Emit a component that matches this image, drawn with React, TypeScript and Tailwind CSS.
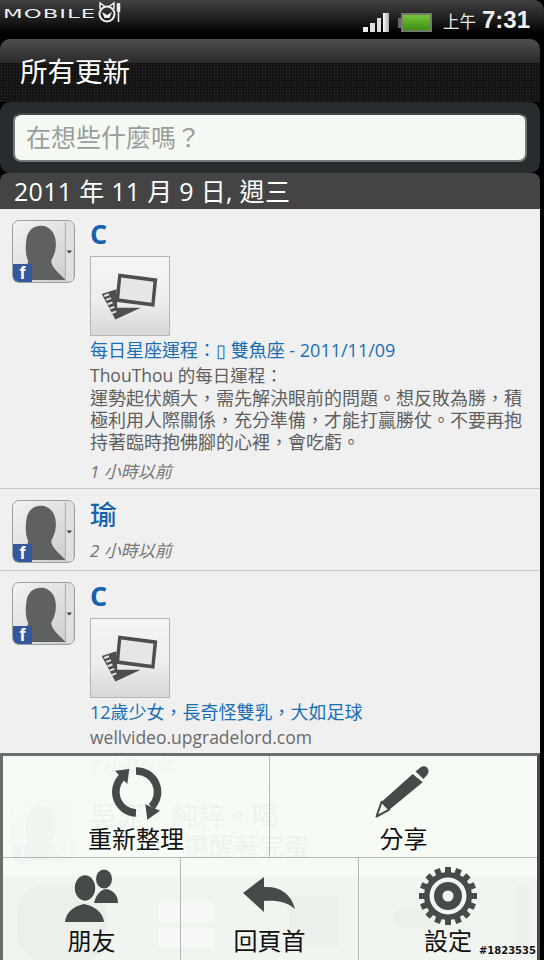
const FONT = "font-['Open_Sans','Noto_Sans_CJK_TC',sans-serif]";

function Avatar() {
  return (
    <div className="relative h-[63px] w-[63px] shrink-0 overflow-hidden rounded-[7px] border border-[#9aa0a0] bg-[linear-gradient(135deg,#f4f4f4,#c9cbc9)]">
      <svg viewBox="0 0 64 64" className="absolute inset-0 h-full w-full">
        <path d="M13 62V54C14 47 15 46 16 42C13 36 13 28 14 20C15 9 23 4 31 5C39 6 45 13 45 24C45 33 42 38 40 42C41 50 48 54 55 62Z" fill="#5f6160" />
        <rect x="55" y="1" width="8" height="62" fill="#dfe1df" />
        <path d="M55 1V63" stroke="#a9abaa" strokeWidth="1" />
        <path d="M56 31h6l-3 3z" fill="#444" />
      </svg>
      <div className="absolute bottom-0 left-0 flex h-[18px] w-[19px] items-end justify-center bg-[#33589b] text-[18px] leading-[18px] font-bold text-white font-['Liberation_Sans',sans-serif]">f</div>
    </div>
  );
}

function Thumb() {
  return (
    <div className="h-[80px] w-[80px] border border-[#b5b7b5] bg-[linear-gradient(180deg,#f5f5f5_0%,#eeeeee_55%,#d6d9d5_100%)]">
      <svg viewBox="0 0 80 80" className="h-full w-full">
        <path d="M11 38L26 33L27 52L51 52L25 64Z" fill="#4d4f4e" />
        <path d="M13.5 40l5-1.8M15.5 44l5-1.8M17 48.500l5-1.800M19 53l5-1.800M21 57.500l5-1.800" stroke="#e4e4e4" strokeWidth="2" />
        <path d="M28 17L68 22L65 51L25 46Z" fill="#4d4f4e" />
        <path d="M31 21L64 25.500L62 47L29 42.500Z" fill="#e6e7e5" />
      </svg>
    </div>
  );
}

function Name({ children }: { children: React.ReactNode }) {
  return <div className="h-[36px] text-[27px] leading-[28px] font-bold text-[#1562ac]">{children}</div>;
}

function Ago({ children }: { children: React.ReactNode }) {
  return <div className="text-[17px] leading-[24px] text-[#767676] italic">{children}</div>;
}

function Logo() {
  return (
    <div className="flex items-center">
      <span className="w-[95px] font-['DejaVu_Sans',sans-serif] text-[13px] leading-[14px] tracking-[0.6px] text-[#eeeeee] [transform-origin:left] [transform:scaleX(1.75)]">MOBILE</span>
      <svg viewBox="0 0 26 26" className="h-[26px] w-[26px]">
        <circle cx="9" cy="13" r="7.500" fill="none" stroke="#eee" strokeWidth="2" />
        <path d="M2 8L2 2L7 5.500M16 8L16 2L11 5.500" fill="none" stroke="#eee" strokeWidth="1.500" />
        <path d="M4 11L9 14L14 11L11.500 17H6.500Z" fill="#eee" />
        <path d="M20.500 2V21M19.500 3H21.500V10H19.500Z" stroke="#eee" strokeWidth="1.500" fill="none" />
      </svg>
    </div>
  );
}

function StatusBar() {
  return (
    <div className="flex h-[39px] shrink-0 items-start justify-between rounded-tr-[10px] bg-[linear-gradient(180deg,#424242_0%,#242424_40%,#000000_85%)] pr-[14px] pl-[3px]">
      <div className="pt-[1px]"><Logo /></div>
      <div className="flex h-[34px] items-end">
        <div className="flex h-[21px] items-end gap-[2px] pb-[2px]">
          <span className="h-[5px] w-[5px] bg-[#eeeeee]" />
          <span className="h-[9px] w-[5px] bg-[#dddddd]" />
          <span className="h-[14px] w-[4px] bg-[#dddddd]" />
          <span className="h-[19px] w-[6px] bg-[linear-gradient(90deg,#fff,#aaa)]" />
        </div>
        <div className="mb-[2px] ml-[9px] flex items-center">
          <span className="h-[10px] w-[3px] bg-[#666b62]" />
          <span className="h-[19px] w-[31px] border-2 border-[#727a6a] bg-[linear-gradient(180deg,#75c53a,#3f8f14)]" />
        </div>
        <span className="ml-[11px] text-[16.500px] leading-[24px] text-[#e8e8e8]">上午</span>
        <span className="ml-[6px] font-['Liberation_Sans',sans-serif] text-[24px] leading-[28px] font-bold text-[#eeeeee]">7:31</span>
      </div>
    </div>
  );
}

function TitleBar() {
  return (
    <div className="relative h-[63px] shrink-0 overflow-hidden rounded-t-[10px] bg-[#141414] bg-[radial-gradient(#2b2b2b_1px,transparent_1px)] bg-[length:3px_3px] pl-[20px]">
      <div className="absolute inset-x-0 top-0 h-[24px] bg-[linear-gradient(180deg,#555555,#2c2c2c)] opacity-90" />
      <div className="relative pt-[14px] text-[27.500px] leading-[38px] text-white">所有更新</div>
    </div>
  );
}

function Composer() {
  return (
    <div className="h-[71px] shrink-0 rounded-[10px] bg-[#272c2e] px-[13px] pt-[11px]">
      <div className="flex h-[49px] items-center rounded-[8px] border-2 border-[#747b75] border-t-[#454a4a] bg-[#f5f9f4] pl-[11px] text-[25px] text-[#9a9d9a]">在想些什麼嗎？</div>
    </div>
  );
}

function DateBar() {
  return (
    <div className="h-[36px] shrink-0 rounded-t-[8px] bg-[#444444] pl-[14px] text-[25px] leading-[36px] tracking-[0.3px] text-white">2011 年 11 月 9 日, 週三</div>
  );
}

function Feed() {
  return (
    <div className="min-h-0 flex-1 overflow-hidden bg-[#f0f0f0]">
      <div className="flex h-[280px] gap-[15px] border-b border-[#c9c9c9] pt-[11px] pl-[12px]">
        <Avatar />
        <div className="w-[440px]">
          <Name>C</Name>
          <Thumb />
          <div className="mt-[2px] text-[18px] leading-[24px] text-[#1a6fb3]">每日星座運程：▯ 雙魚座 - 2011/11/09</div>
          <div className="mt-[1px] text-[17.500px] leading-[24px] text-[#5f5f5f]">ThouThou 的每日運程：</div>
          <div className="text-[18px] leading-[22px] text-[#5f5f5f]">
            運勢起伏頗大，需先解決眼前的問題。想反敗為勝，積<br />極利用人際關係，充分準備，才能打贏勝仗。不要再抱<br />持著臨時抱佛腳的心裡，會吃虧。
          </div>
          <div className="mt-[7px]"><Ago>1 小時以前</Ago></div>
        </div>
      </div>
      <div className="flex h-[82px] gap-[15px] border-b border-[#c9c9c9] pt-[11px] pl-[12px]">
        <Avatar />
        <div>
          <div className="h-[30px] text-[27px] leading-[30px] font-medium text-[#1562ac]">瑜</div>
          <div className="mt-[9px]"><Ago>2 小時以前</Ago></div>
        </div>
      </div>
      <div className="flex h-[218px] gap-[15px] border-b border-[#c9c9c9] pt-[11px] pl-[12px]">
        <Avatar />
        <div>
          <Name>C</Name>
          <Thumb />
          <div className="mt-[2px] text-[18px] leading-[24px] text-[#1a6fb3]">12歲少女，長奇怪雙乳，大如足球</div>
          <div className="text-[17.500px] leading-[26px] text-[#6a6a6a]">wellvideo.upgradelord.com</div>
          <div className="mt-[4px]"><Ago>2 小時以前</Ago></div>
        </div>
      </div>
      <div className="flex gap-[15px] pt-[11px] pl-[12px]">
        <div className="opacity-70"><Avatar /></div>
        <div className="pt-[2px] text-[27px] leading-[28px] text-[#555555]">
          <div>吳窕，純粹。喝</div>
          <div className="mt-[2px] pl-[94px] text-[25px]">還醒著完蛋</div>
        </div>
      </div>
    </div>
  );
}

function RefreshIcon() {
  return (
    <svg viewBox="0 0 56 56" className="h-[56px] w-[56px] overflow-visible">
      <path d="M28 5A21 21 0 0 1 43.500 40.800M28 47A21 21 0 0 1 13.900 11.200" fill="none" stroke="#474b48" strokeWidth="7.500" />
      <path d="M7 4.700L21.300 3L19.300 18Z" fill="#474b48" />
      <path d="M37.300 38.300L52 44.700L39.300 53.700Z" fill="#474b48" />
    </svg>
  );
}

function PencilIcon() {
  return (
    <svg viewBox="0 0 56 56" className="h-[56px] w-[56px] overflow-visible">
      <path d="M36.700 8L46.700 16.300L13.300 43.700L5.700 35.700Z" fill="#474b48" />
      <path d="M5.700 35.700L13.300 43.700L0.500 50.500Z" fill="#f6faf5" stroke="#474b48" strokeWidth="2" strokeLinejoin="round" />
      <path d="M39.500 5.500L45 1C47 -0.500 50 0 51.500 2C53 4 53 7 51 9L47.500 13Z" fill="#474b48" />
    </svg>
  );
}

function PeopleIcon() {
  return (
    <svg viewBox="0 0 56 56" className="h-[56px] w-[56px]">
      <ellipse cx="40" cy="11" rx="8" ry="9.500" fill="#474b48" />
      <path d="M30 35C32 27 36 22 42 21C49 22 54 27 54 35Z" fill="#474b48" />
      <ellipse cx="21" cy="20" rx="11" ry="13.500" fill="#474b48" stroke="#f6faf5" strokeWidth="1.500" />
      <path d="M1 54C2 44 10 38 20 36C30 38 39 44 40 54Z" fill="#474b48" />
    </svg>
  );
}

function ReplyIcon() {
  return (
    <svg viewBox="0 0 56 56" className="h-[56px] w-[56px]">
      <path d="M1 25L22 9V19C37 18 49 25 53 41C45 34 35 32 22 33V44Z" fill="#474b48" />
    </svg>
  );
}

function GearIcon() {
  const teeth = Array.from({ length: 16 }, (_, i) => i * 22.5);
  return (
    <svg viewBox="0 0 60 60" className="h-[60px] w-[60px]">
      {teeth.map((a) => (
        <rect key={a} x="27" y="1" width="6" height="8" fill="#474b48" transform={`rotate(${a} 30 30)`} />
      ))}
      <circle cx="30" cy="30" r="24" fill="#474b48" />
      <circle cx="30" cy="30" r="18.500" fill="#f4f8f3" />
      <circle cx="30" cy="30" r="14" fill="#474b48" />
      <circle cx="30" cy="30" r="5.500" fill="#f4f8f3" />
    </svg>
  );
}

function MenuItem({ icon, label, className }: { icon: React.ReactNode; label: string; className: string }) {
  return (
    <div className={`relative flex flex-col items-center ${className}`}>
      <div className="flex h-[58px] items-center justify-center">{icon}</div>
      <div className="text-[24px] leading-[32px] text-[#111111]">{label}</div>
    </div>
  );
}

function BottomMenu() {
  return (
    <div className="absolute right-[4px] bottom-0 left-0 h-[207px] border-t-[3px] border-r-[3px] border-l-[3px] border-[#6b6f6b] border-r-[#474a47] bg-[#f7fbf6]/[0.95]">
      <div className="absolute inset-x-0 bottom-0 h-[84px] bg-[#e9eee8]/40" />
      <svg viewBox="0 0 540 84" className="absolute inset-x-0 bottom-0 h-[84px] w-full opacity-[0.025]">
        <rect x="15" y="10" width="90" height="74" rx="24" fill="#444" />
        <rect x="290" y="20" width="50" height="50" fill="#444" />
        <rect x="395" y="32" width="50" height="20" rx="10" fill="#444" />
        <rect x="518" y="10" width="14" height="70" fill="#444" />
      </svg>
      <svg viewBox="0 0 540 84" className="absolute inset-x-0 bottom-0 h-[84px] w-full opacity-40">
        <rect x="157" y="26" width="56" height="20" fill="#fff" />
        <rect x="157" y="52" width="56" height="20" fill="#fff" />
      </svg>
      <div className="relative flex h-[102px] border-b border-[#b4b8b4]">
        <MenuItem icon={<RefreshIcon />} label="重新整理" className="w-[267px] border-r border-[#b4b8b4] pt-[9px]" />
        <MenuItem icon={<PencilIcon />} label="分享" className="flex-1 pt-[9px]" />
      </div>
      <div className="relative flex h-[102px]">
        <MenuItem icon={<PeopleIcon />} label="朋友" className="w-[178px] border-r border-[#b4b8b4] pt-[9px]" />
        <MenuItem icon={<ReplyIcon />} label="回頁首" className="w-[178px] border-r border-[#b4b8b4] pt-[9px]" />
        <MenuItem icon={<GearIcon />} label="設定" className="flex-1 pt-[9px]" />
      </div>
    </div>
  );
}

export default function App() {
  return (
    <div lang="zh-TW" className={`relative flex h-[960px] w-[544px] flex-col overflow-hidden bg-black ${FONT}`}>
      <StatusBar />
      <div className="flex min-h-0 w-[540px] flex-1 flex-col">
        <TitleBar />
        <Composer />
        <DateBar />
        <Feed />
      </div>
      <BottomMenu />
      <div className="absolute right-[8px] bottom-[4px] font-['DejaVu_Sans',sans-serif] text-[10px] leading-[10px] font-bold text-[#111111] [text-shadow:0_0_1px_#ffffff,0_0_2px_#ffffff]">#1823535</div>
    </div>
  );
}
